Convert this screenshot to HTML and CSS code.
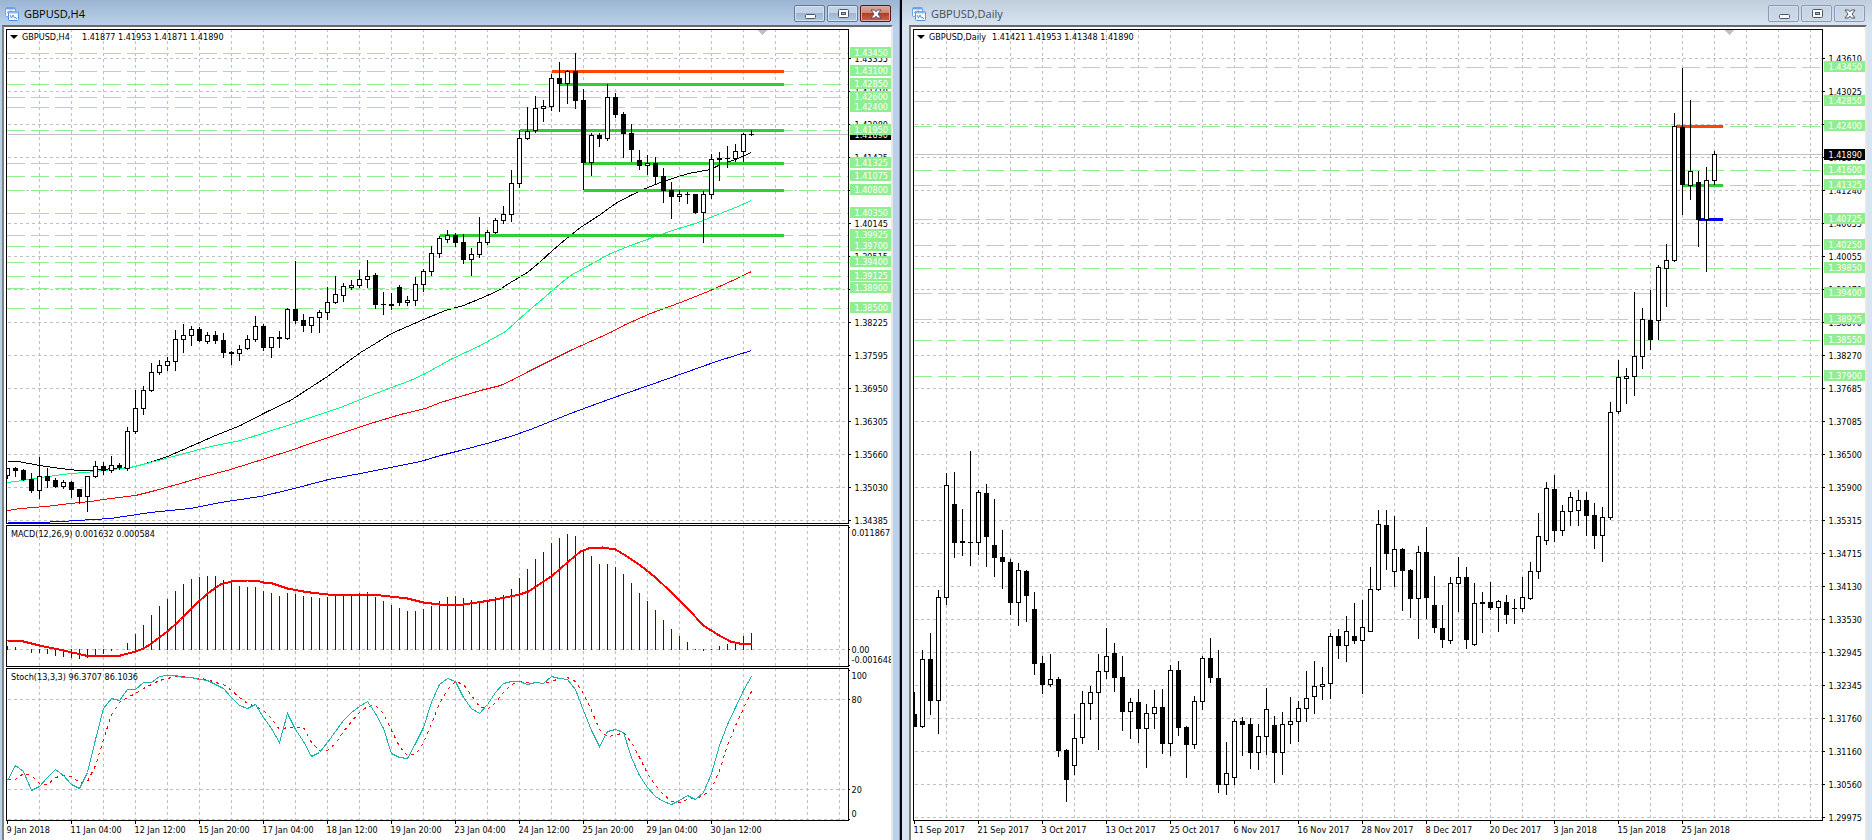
FILE: index.html
```html
<!DOCTYPE html>
<html lang="en">
<head>
<meta charset="utf-8">
<title>GBPUSD charts</title>
<link rel="stylesheet" href="styles.css">
</head>
<body>
<svg class="symbols" aria-hidden="true">
  <symbol id="chart-icon" viewBox="0 0 14 14">
    <rect x="0.5" y="0.5" width="10" height="9" rx="1" fill="#fff" stroke="#6ba3ea"/>
    <path d="M1 1.5h9" stroke="#6ba3ea" stroke-width="2"/>
    <path d="M2 5.5h1v-1h1M6 3v2h1v1" stroke="#6ba3ea" fill="none"/>
    <rect x="3.5" y="4.5" width="10" height="9" rx="1" fill="#fff" stroke="#4f90e0"/>
    <path d="M4 5.5h9" stroke="#8dbaf2" stroke-width="2"/>
    <path d="M5 8l1.500 3 1.500-3 1.500 3 1-1 .5 1.500h1" stroke="#4f90e0" fill="none"/>
  </symbol>
  <symbol id="minimize-icon" viewBox="0 0 12 10">
    <rect x="1.500" y="5.500" width="10" height="4" rx="1" fill="#fff" stroke="#4d5266"/>
  </symbol>
  <symbol id="maximize-icon" viewBox="0 0 12 10">
    <rect x="1.500" y="0.500" width="10" height="8" rx="1" fill="#fff" stroke="#4d5266"/>
    <rect x="4.500" y="3.500" width="4" height="2" fill="#a9bdd4" stroke="#4d5266"/>
  </symbol>
  <symbol id="close-icon" viewBox="0 0 12 10">
    <path d="M1 1h3.500L6 2.800 7.500 1H11L8 5l3 4H7.500L6 7.200 4.500 9H1l3-4z" fill="#fff" stroke="#4d5266"/>
  </symbol>
</svg>

<main class="desktop">
  <section class="window window-active" aria-label="GBPUSD,H4">
    <header class="titlebar">
      <svg class="title-icon"><use href="#chart-icon"/></svg>
      <h1 class="title">GBPUSD,H4</h1>
      <div class="controls">
        <button class="control" type="button" aria-label="Minimize"><svg><use href="#minimize-icon"/></svg></button>
        <button class="control" type="button" aria-label="Maximize"><svg><use href="#maximize-icon"/></svg></button>
        <button class="control control-close" type="button" aria-label="Close"><svg><use href="#close-icon"/></svg></button>
      </div>
    </header>
    <div class="client client-h4">
      <div class="pane">
        <svg class="plot" id="h4-price"></svg>
        <p class="legend"><span class="arrow"></span><span class="symbol-name">GBPUSD,H4</span><span>1.41877 1.41953 1.41871 1.41890</span></p>
      </div>
      <svg class="axis" id="h4-price-axis"></svg>
      <div class="pane">
        <svg class="plot" id="h4-macd"></svg>
        <p class="legend legend-sub">MACD(12,26,9) 0.001632 0.000584</p>
      </div>
      <svg class="axis" id="h4-macd-axis"></svg>
      <div class="pane">
        <svg class="plot" id="h4-stoch"></svg>
        <p class="legend legend-sub">Stoch(13,3,3) 96.3707 86.1036</p>
      </div>
      <svg class="axis" id="h4-stoch-axis"></svg>
      <svg class="dates" id="h4-dates"></svg>
    </div>
  </section>

  <section class="window window-idle" aria-label="GBPUSD,Daily">
    <header class="titlebar">
      <svg class="title-icon"><use href="#chart-icon"/></svg>
      <h1 class="title">GBPUSD,Daily</h1>
      <div class="controls">
        <button class="control" type="button" aria-label="Minimize"><svg><use href="#minimize-icon"/></svg></button>
        <button class="control" type="button" aria-label="Maximize"><svg><use href="#maximize-icon"/></svg></button>
        <button class="control" type="button" aria-label="Close"><svg><use href="#close-icon"/></svg></button>
      </div>
    </header>
    <div class="client client-daily">
      <div class="pane">
        <svg class="plot" id="daily-price"></svg>
        <p class="legend"><span class="arrow"></span><span class="symbol-name">GBPUSD,Daily</span><span>1.41421 1.41953 1.41348 1.41890</span></p>
      </div>
      <svg class="axis" id="daily-price-axis"></svg>
      <svg class="dates" id="daily-dates"></svg>
    </div>
  </section>
</main>
<script src="charts.js"></script>
</body>
</html>
```
FILE: styles.css
```css
* {
  box-sizing: border-box;
}

body {
  margin: 0;
  background: #000;
  color: #000;
  font-family: "DejaVu Sans Condensed", "DejaVu Sans", sans-serif;
  font-size: 9px;
}

.symbols {
  display: none;
}

.desktop {
  display: grid;
  grid-template-columns: 900fr 972fr;
  height: 100vh;
  overflow: hidden;
}

.window {
  display: flex;
  flex-direction: column;
  min-width: 0;
}

.window-active {
  padding: 0 6px 0 2px;
  border-right: 1px solid #3fb4d4;
  background: linear-gradient(#9bb4d2, #b9d1ea 25px);
}

.window-idle {
  padding: 0 5px 0 7px;
  border-left: 2px solid #05050f;
  background: linear-gradient(#c0cddb, #d7e4f2 25px);
}

.titlebar {
  display: flex;
  flex: none;
  align-items: center;
  gap: 5px;
  height: 25px;
  padding: 2px 2px 0 3px;
}

.title-icon {
  width: 14px;
  height: 14px;
}

.title {
  margin: 0;
  font: 11px/16px "Open Sans", "Noto Sans", sans-serif;
}

.window-idle .title {
  color: #454b57;
}

.controls {
  display: flex;
  gap: 2px;
  margin-left: auto;
}

.control {
  display: grid;
  place-items: center;
  width: 31px;
  height: 17px;
  padding: 0;
  border: 1px solid #667a98;
  border-radius: 2px;
  background: linear-gradient(#c3d3e6 0 50%, #9db6d3 50%, #b5cbe3);
  box-shadow: inset 0 0 0 1px #d5e1ef;
}

.control svg {
  width: 12px;
  height: 10px;
}

.control-close {
  border-color: #4e1a20;
  background: linear-gradient(#dda79f, #cf8375 50%, #b33a24 50%, #c9654c);
  box-shadow: inset 0 0 0 1px #dfaaa0;
}

.window-idle .control {
  border-color: #8b9ab8;
  background: linear-gradient(#c5d2e1, #cddae8);
  box-shadow: inset 0 0 0 1px #d3deeb;
}

.client {
  display: grid;
  flex: 1;
  grid-template-columns: minmax(0, 1fr) 42px;
  row-gap: 1px;
  min-height: 0;
  padding: 2px 0 0 2px;
  border: 2px solid;
  border-color: #696969 #e9e6e6 #fff #808080;
  border-bottom: 0;
  background: #fff;
}

.client-h4 {
  grid-template-rows: minmax(0, 1fr) 142px 153px 18px;
}

.client-daily {
  grid-template-rows: minmax(0, 1fr) 18px;
}

.pane {
  position: relative;
  min-width: 0;
  border: 1px solid #000;
}

.plot,
.axis,
.dates {
  display: block;
  width: 100%;
  height: 100%;
  overflow: hidden;
  shape-rendering: crispEdges;
}

.dates {
  grid-column: 1 / -1;
  overflow: visible;
}

.legend {
  position: absolute;
  top: 0;
  left: 0;
  display: flex;
  align-items: center;
  margin: 0;
  padding-left: 3px;
  line-height: 14px;
  white-space: nowrap;
}

.legend-sub {
  top: 1px;
  padding-left: 4px;
}

.arrow {
  margin-right: 4px;
  border: 4px solid transparent;
  border-top-color: #000;
  border-bottom: 0;
}

.symbol-name {
  min-width: 54px;
  margin-right: 6px;
}

.grid-line {
  stroke: #c0c0c0;
  stroke-dasharray: 3 3;
}

.level {
  stroke: #90ee90;
  stroke-dasharray: 18 6;
}

.bid {
  stroke: #c0c0c0;
}

.marker {
  fill: #c0c0c0;
}

.curve {
  fill: none;
}

.macd-bar {
  stroke: #00f;
}

.candle {
  stroke: #000;
  fill: #fff;
}

.candle-down {
  fill: #000;
}

.tick {
  stroke: #000;
}

.label {
  fill: #000;
}

.tag {
  fill: #90ee90;
}

.tag-text {
  fill: #fff;
}

.tag-bid {
  fill: #000;
}
```
FILE: charts.js
```js
const NS = 'http://www.w3.org/2000/svg';

function add(parent, name, attrs, text) {
  const node = document.createElementNS(NS, name);
  for (const key in attrs) node.setAttribute(key, attrs[key]);
  if (text !== undefined) node.textContent = text;
  parent.appendChild(node);
  return node;
}

// Group whose integer coordinates are pixel centres of the chart surface.
function surface(id, left, top) {
  return add(document.getElementById(id), 'g', {
    transform: `translate(${0.5 - left} ${0.5 - top})`
  });
}

const line = (g, cls, x1, y1, x2, y2, extra) =>
  add(g, 'line', Object.assign({ class: cls, x1, y1, x2, y2 }, extra));

const FAR = 4000;

function grid(g, firstX, top, left, rows) {
  for (let x = firstX; x < FAR; x += 32) line(g, 'grid-line', x, top - 0.5, x, FAR);
  for (const y of rows) line(g, 'grid-line', left + 0.5, y, FAR, y);
}

const curve = (g, color, points, extra) =>
  add(g, 'polyline', Object.assign({ class: 'curve', stroke: color, points }, extra));

const series = (left, values) => values.map((y, i) => `${left + 8 * i},${y}`).join(' ');

// Each bar: high, body top, body bottom, low, direction (1 up, 0 down).
function candles(g, left, bars) {
  bars.forEach(([high, top, bottom, low, up], i) => {
    const x = left + 8 * i;
    line(g, 'tick', x, high - 0.5, x, low + 0.5);
    if (top === bottom) line(g, 'tick', x - 2.5, top, x + 2.5, top);
    else add(g, 'rect', { class: up ? 'candle' : 'candle candle-down', x: x - 2, y: top, width: 4, height: bottom - top });
  });
}

function priceAxis(id, x, top, firstY, prices, levels, bid) {
  const g = surface(id, x, top);
  prices.forEach((p, i) => {
    const y = firstY + 33 * i;
    line(g, 'tick', x - 0.5, y, x + 1.5, y);
    add(g, 'text', { class: 'label', x: x + 5, y: y + 3 }, p);
  });
  add(g, 'rect', { class: 'tag-bid', x: x + 0.5, y: bid - 5.5, width: 41, height: 11 });
  add(g, 'text', { class: 'tag-text', x: x + 5, y: bid + 3 }, '1.41890');
  for (const [p, y] of levels) {
    add(g, 'rect', { class: 'tag', x: x + 0.5, y: y - 6.5, width: 41, height: 11 });
    add(g, 'text', { class: 'tag-text', x: x + 5, y: y + 2 }, p);
  }
}

function dates(id, left, first, labels) {
  const g = surface(id, left, 822);
  labels.forEach((d, i) => {
    const x = first + 64 * i;
    line(g, 'tick', x, 820.5, x, 823.5);
    add(g, 'text', { class: 'label', x: x - 1, y: 832 }, d);
  });
}

const rows = n => Array.from({ length: n }, (_, i) => 58 + 33 * i);

/* ---------- H4 ---------- */

const h4Levels = [
  ['1.43450', 53], ['1.43100', 71], ['1.42850', 84], ['1.42600', 97], ['1.42400', 107],
  ['1.41950', 130], ['1.41325', 163], ['1.41075', 176], ['1.40800', 190], ['1.40350', 213],
  ['1.39925', 235], ['1.39700', 246], ['1.39400', 262], ['1.39125', 276], ['1.38900', 288],
  ['1.38500', 308]
];

const h4Bars = [
  [468,468,475,478,1],[467,468,470,476,0],[469,470,479,480,0],[473,479,490,492,0],[457,476,490,498,1],
  [468,476,480,487,0],[478,480,486,487,0],[480,482,486,488,1],[481,482,489,497,0],[489,489,496,503,0],
  [476,476,496,511,1],[461,466,476,477,1],[462,466,470,474,0],[456,465,470,472,1],[463,465,467,469,0],
  [427,431,468,470,1],[390,408,431,433,1],[386,390,408,414,1],[363,372,390,391,1],[360,365,372,374,1],
  [357,361,365,370,1],[330,339,361,370,1],[324,335,339,352,1],[326,329,335,345,1],[327,329,340,341,0],
  [332,335,341,343,1],[331,335,340,343,0],[333,340,352,357,0],[351,352,353,364,0],[345,349,353,360,1],
  [335,339,348,349,1],[316,326,339,341,1],[324,326,347,350,0],[337,337,347,357,1],[331,337,338,347,0],
  [308,309,338,339,1],[261,309,320,323,0],[314,320,325,331,0],[317,317,325,332,1],[310,312,317,332,1],
  [287,302,312,319,1],[276,294,302,303,1],[283,286,295,301,1],[280,285,287,289,1],[270,279,285,287,1],
  [260,276,279,287,1],[273,275,304,308,0],[292,304,304,314,1],[293,304,305,309,0],[285,287,302,305,0],
  [296,300,302,305,1],[277,284,300,305,1],[269,271,284,291,1],[246,253,271,275,1],[236,238,253,257,1],
  [230,235,239,242,1],[233,235,242,246,0],[234,242,259,263,0],[248,254,259,275,1],[217,242,254,257,1],
  [230,232,242,244,1],[218,220,232,233,1],[206,214,220,223,1],[170,183,214,221,1],[130,138,183,187,1],
  [107,131,138,139,1],[96,108,130,132,1],[100,106,108,121,1],[74,78,106,110,1],[62,78,83,111,0],
  [70,71,83,103,1],[53,71,100,108,0],[89,100,162,189,0],[133,135,162,175,1],[133,135,138,146,0],
  [84,97,138,140,1],[93,97,114,117,0],[112,114,133,157,0],[124,133,149,161,0],[150,160,165,169,0],
  [155,163,165,174,1],[157,163,176,183,0],[168,176,190,202,0],[182,190,196,218,0],[190,194,196,201,1],
  [192,194,194,203,1],[194,194,212,213,0],[191,194,212,242,1],[154,159,194,198,1],[152,158,159,180,0],
  [146,158,158,167,1],[144,151,158,161,1],[133,134,151,161,1],[130,134,134,135,1]
];

const price = surface('h4-price', 7, 30);
grid(price, 39, 29, 7, rows(15));
curve(price, '#000', '7,461 18,461 39,465 60,468 78,470 91,470 100,469 131,467 152,461 167,456 190,446 215,435 240,425 265,412 290,400 310,387 327,376 345,363 360,352 375,343 391,333 407,326 423,319 445,310 463,305 480,298 496,291 510,282 527,272 540,261 552,250 566,238 580,227 600,214 615,203 630,195 645,188 660,182 675,177 688,173 710,169 718,165 735,159 751,152');
curve(price, '#00ff7f', '7,482 22,480 40,477 55,475 70,473 85,472 103,470 130,467 150,462 180,454 210,446 240,440 265,432 290,424 310,417 340,407 370,395 391,387 410,380 425,373 450,359 480,345 505,331 525,313 545,296 560,283 570,275 590,264 610,253 630,245 655,236 675,229 695,223 715,215 735,207 751,200');
curve(price, '#f00', '7,510 20,508 45,506 70,503 90,501 110,498 135,495 155,490 180,483 200,477 230,469 265,458 290,450 310,443 340,433 370,423 400,414 425,408 440,402 460,396 480,390 500,385 511,380 530,370 550,360 570,350 590,341 610,332 625,324 650,313 680,302 710,290 730,281 751,271');
curve(price, '#00f', '7,522 40,522 60,521 110,518 150,512 190,508 220,502 260,496 290,489 328,479 360,473 390,467 420,461 440,455 460,450 490,442 510,436 530,429 550,421 570,413 597,403 625,393 651,384 685,372 716,361 735,355 751,350');
for (const [, y] of h4Levels) line(price, 'level', 6.5, y, FAR, y);
line(price, 'bid', 7, 134, FAR, 134);
[[551, 71, '#ff4500'], [559, 84, '#32cd32'], [519, 130, '#32cd32'], [583, 163, '#32cd32'], [583, 190, '#32cd32'], [439, 235, '#32cd32']]
  .forEach(([x, y, stroke]) => line(price, 'zone', x, y, 783, y, { stroke, 'stroke-width': 3 }));
candles(price, 7, h4Bars);
add(price, 'path', { class: 'marker', d: 'M757 29.5h10l-5 5z' });

priceAxis('h4-price-axis', 849, 29, 58,
  ['1.43355', '1.42710', '1.42080', '1.41435', '1.40790', '1.40145', '1.39515', '1.38870', '1.38225',
    '1.37595', '1.36950', '1.36305', '1.35660', '1.35030', '1.34385'], h4Levels, 134);

const macd = surface('h4-macd', 7, 526);
grid(macd, 39, 525, 7, [649]);
[646,647,649,652,652,653,655,656,657,658,657,654,653,650,649,643,634,625,615,606,599,591,584,579,577,576,576,
  580,583,586,587,587,591,593,596,593,594,596,597,598,597,596,596,596,593,592,597,601,605,608,611,611,609,606,
  601,597,596,598,600,601,600,597,595,589,578,569,559,552,543,538,534,536,550,556,564,564,567,574,583,593,601,
  610,620,629,636,642,649,650,649,646,644,642,636,633]
  .forEach((y, i) => {
    if (y !== 649 || i > 80) line(macd, 'macd-bar', 7 + 8 * i, Math.min(y, 649) - 0.5, 7 + 8 * i, Math.max(y, 649) + 0.5);
  });
curve(macd, '#f00', '7,640 23,641 39,645 63,650 85,655 95,655 120,655 135,651 143,648 151,643 167,631 180,619 195,604 207,593 220,584 231,581 247,580 256,580 263,582 272,583 287,588 303,591 310,592 327,594 350,595 367,594 380,595 407,598 423,602 439,604 463,604 483,601 495,599 519,594 528,591 543,581 552,575 568,561 580,551 588,548 602,547 615,549 625,555 640,565 655,577 671,592 687,608 703,625 717,634 730,641 739,643 751,643', { 'stroke-width': 2 });

const macdAxis = surface('h4-macd-axis', 849, 525);
for (const y of [527, 649, 665]) line(macdAxis, 'tick', 848.5, y, 849.5, y);
for (const [t, y] of [['0.011867', 535], ['0.00', 652], ['-0.001648', 662]])
  add(macdAxis, 'text', { class: 'label', x: 851, y }, t);

const stoch = surface('h4-stoch', 7, 669);
grid(stoch, 39, 668, 7, [699, 789, 819]);
curve(stoch, '#f00', series(7, [779,779,773,775,783,784,777,775,776,782,781,765,739,714,702,697,693,688,684,680,
  678,676,676,677,678,679,682,684,690,697,703,706,710,718,729,727,727,727,742,750,750,743,731,721,712,706,705,
  713,730,746,755,754,742,723,703,689,681,684,695,706,709,702,692,684,681,682,682,683,681,678,677,681,693,710,
  729,736,735,732,742,757,773,785,794,801,802,799,798,795,788,770,745,725,708,691]), { 'stroke-dasharray': '3 4' });
curve(stoch, '#20b2aa', series(7, [780,765,771,790,786,777,769,775,784,788,772,739,708,698,700,689,689,682,682,676,
  675,675,677,677,679,680,684,688,697,705,708,704,717,728,742,713,729,741,756,752,742,731,720,712,706,701,713,
  728,753,757,758,743,727,702,684,678,681,697,708,713,704,692,683,681,681,684,682,683,676,678,679,689,710,730,
  746,731,729,732,757,775,787,796,801,804,800,795,799,792,773,745,724,707,690,676]));

const stochAxis = surface('h4-stoch-axis', 849, 668);
for (const y of [670, 699, 789, 819]) line(stochAxis, 'tick', 848.5, y, 849.5, y);
for (const [t, y] of [['100', 678], ['80', 702], ['20', 792], ['0', 816]])
  add(stochAxis, 'text', { class: 'label', x: 851, y }, t);

dates('h4-dates', 6, 7, ['9 Jan 2018', '11 Jan 04:00', '12 Jan 12:00', '15 Jan 20:00', '17 Jan 04:00',
  '18 Jan 12:00', '19 Jan 20:00', '23 Jan 04:00', '24 Jan 12:00', '25 Jan 20:00', '29 Jan 04:00', '30 Jan 12:00']);

/* ---------- Daily ---------- */

const dailyLevels = [
  ['1.43450', 67], ['1.42850', 101], ['1.42400', 126], ['1.41600', 170], ['1.41325', 185], ['1.40725', 219],
  ['1.40250', 245], ['1.39850', 268], ['1.39400', 293], ['1.38925', 319], ['1.38550', 340], ['1.37900', 376]
];

const dailyBars = [
  [692,714,726,726,0],[650,659,726,727,1],[633,659,700,714,0],[590,597,700,733,1],[473,485,597,604,1],
  [472,504,542,557,0],[509,541,542,555,0],[451,542,542,565,1],[490,492,542,554,1],[484,493,536,566,0],
  [499,545,557,576,0],[530,557,561,588,0],[559,562,602,614,0],[563,570,602,625,1],[570,571,595,621,0],
  [592,609,663,674,0],[656,663,684,693,0],[654,679,684,686,1],[677,679,750,756,0],[749,750,779,801,0],
  [714,738,765,774,1],[691,703,737,743,1],[686,692,703,719,1],[654,671,692,749,1],[628,656,671,678,1],
  [643,653,677,691,0],[656,677,711,730,0],[698,702,711,738,1],[689,702,728,742,0],[704,713,728,767,1],
  [690,707,713,728,1],[689,707,743,753,0],[665,670,743,755,1],[661,670,727,735,0],[726,727,744,777,0],
  [696,701,744,748,1],[656,658,701,709,1],[638,658,677,682,0],[650,678,784,792,0],[742,773,784,794,1],
  [719,721,777,784,1],[717,721,724,755,0],[718,724,752,768,0],[724,736,752,769,1],[688,709,736,754,1],
  [716,725,752,782,0],[712,724,752,774,1],[697,721,724,743,1],[701,708,721,741,1],[671,698,708,721,1],
  [661,686,696,713,1],[667,684,686,699,1],[633,636,683,698,1],[629,636,645,658,0],[616,631,645,661,1],
  [603,636,640,643,0],[600,627,640,693,1],[567,589,631,631,1],[510,524,589,590,1],[510,525,553,569,0],
  [516,549,571,586,1],[548,549,570,610,0],[569,570,598,617,0],[546,552,598,638,1],[527,552,597,618,0],
  [576,605,627,632,0],[605,628,639,647,0],[577,583,640,643,1],[557,577,583,611,1],[567,577,639,648,0],
  [583,603,644,645,1],[592,602,603,632,0],[582,602,607,609,0],[600,601,607,631,1],[595,602,614,623,0],
  [599,608,608,623,1],[577,597,608,611,1],[562,571,598,599,1],[513,536,571,578,1],[482,488,540,544,1],
  [475,489,530,541,0],[505,511,530,535,1],[492,497,511,525,1],[490,500,510,525,1],[492,500,515,535,0],
  [503,515,535,548,0],[507,517,535,561,1],[402,412,517,519,1],[360,377,411,413,1],[368,376,378,403,1],
  [292,356,376,395,1],[308,319,356,368,1],[290,320,339,349,0],[265,267,320,339,1],[244,260,268,306,1],
  [113,126,260,261,1],[68,127,184,214,0],[100,171,185,199,1],[171,182,219,246,0],[167,180,219,271,1],
  [151,154,180,184,1]
];

const daily = surface('daily-price', 914, 30);
grid(daily, 946, 29, 914, rows(24));
for (const [, y] of dailyLevels) line(daily, 'level', 913.5, y, FAR, y);
line(daily, 'bid', 914, 154, FAR, 154);
[[1675, 126, '#ff4500'], [1682, 185, '#32cd32'], [1698, 219, '#0000ff']]
  .forEach(([x, y, stroke]) => line(daily, 'zone', x, y, 1722, y, { stroke, 'stroke-width': 3 }));
candles(daily, 914, dailyBars);
add(daily, 'path', { class: 'marker', d: 'M1724 29.5h10l-5 5z' });

priceAxis('daily-price-axis', 1823, 29, 58,
  ['1.43610', '1.43025', '1.42440', '1.41840', '1.41240', '1.40655', '1.40055', '1.39470', '1.38870', '1.38270',
    '1.37685', '1.37085', '1.36500', '1.35900', '1.35315', '1.34715', '1.34130', '1.33530', '1.32945', '1.32345',
    '1.31760', '1.31160', '1.30560', '1.29975'], dailyLevels, 154);

dates('daily-dates', 913, 914, ['11 Sep 2017', '21 Sep 2017', '3 Oct 2017', '13 Oct 2017', '25 Oct 2017',
  '6 Nov 2017', '16 Nov 2017', '28 Nov 2017', '8 Dec 2017', '20 Dec 2017', '3 Jan 2018', '15 Jan 2018', '25 Jan 2018']);
```
